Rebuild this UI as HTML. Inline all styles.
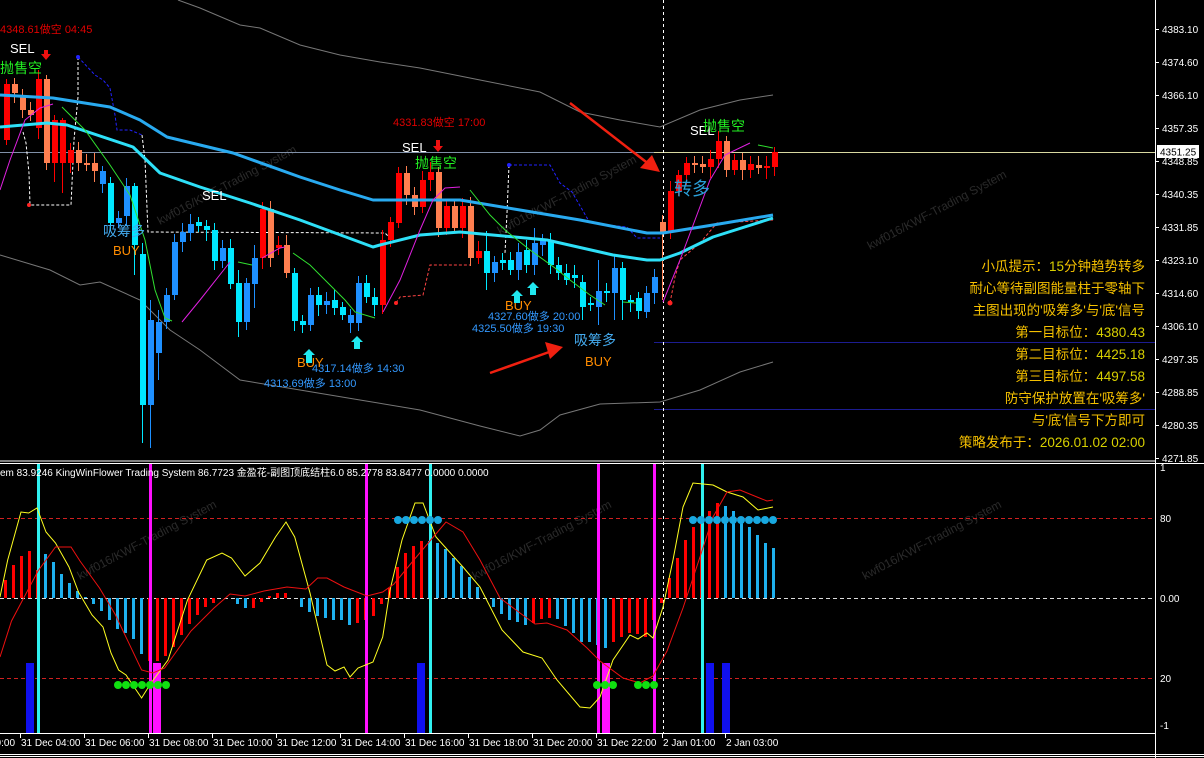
<!DOCTYPE html>
<html><head><meta charset="utf-8"><style>
html,body{margin:0;padding:0;background:#000;overflow:hidden}
svg{display:block}
text{font-family:"Liberation Sans","Noto Sans CJK SC",sans-serif}
</style></head><body>
<svg id="s" width="1204" height="758" viewBox="0 0 1204 758" xmlns="http://www.w3.org/2000/svg">
<rect width="1204" height="758" fill="#000"/>
<g fill="#2a2a2a" font-size="12">
<text transform="translate(160,225) rotate(-28)">kwf016/KWF-Trading System</text>
<text transform="translate(500,235) rotate(-28)">kwf016/KWF-Trading System</text>
<text transform="translate(870,250) rotate(-28)">kwf016/KWF-Trading System</text>
<text transform="translate(80,580) rotate(-28)">kwf016/KWF-Trading System</text>
<text transform="translate(475,580) rotate(-28)">kwf016/KWF-Trading System</text>
<text transform="translate(865,580) rotate(-28)">kwf016/KWF-Trading System</text>
</g>
<polyline fill="none" stroke="#777" stroke-width="1" points="178,0 200,8 240,25 260,28 300,45 340,55 380,62 420,68 480,80 540,92 580,112 620,120 660,127 700,110 740,100 773,95"/>
<polyline fill="none" stroke="#777" stroke-width="1" points="0,255 50,270 80,285 100,282 140,300 170,330 200,350 240,380 300,390 360,400 420,410 480,426 520,436 540,430 560,415 600,404 660,402 700,390 740,372 773,362"/>
<line x1="0" y1="152.5" x2="654" y2="152.5" stroke="#8090a8"/>
<line x1="654" y1="152.5" x2="1155" y2="152.5" stroke="#d8d8a0"/>
<line x1="654" y1="342.5" x2="1155" y2="342.5" stroke="#1c1c90"/>
<line x1="654" y1="409.5" x2="1155" y2="409.5" stroke="#1c1c90"/>
<line x1="663.5" y1="0" x2="663.5" y2="733" stroke="#fff" stroke-dasharray="3,3"/>
<polyline fill="none" stroke="#fff" stroke-dasharray="3,2" points="78,57 78,97 74,140 71,205 30,205 29,173 26,143 23,132"/>
<polyline fill="none" stroke="#22f" stroke-dasharray="3,2" points="78,57 95,75 103,80 110,88 115,115 117,130 130,130 142,135"/>
<polyline fill="none" stroke="#fff" stroke-dasharray="3,2" points="142,135 145,160 148,232 385,233 392,240"/>
<polyline fill="none" stroke="#f44" stroke-dasharray="3,2" points="396,303 400,297 423,295 430,265 470,265"/>
<polyline fill="none" stroke="#fff" stroke-dasharray="3,2" points="509,165 507,213 505,253"/>
<polyline fill="none" stroke="#22f" stroke-dasharray="3,2" points="509,165 550,165 560,183 572,192 590,223 627,227 637,238 660,238"/>
<polyline fill="none" stroke="#f44" stroke-dasharray="3,2" points="670,303 675,277 680,260 700,243 717,223 773,220"/>
<circle cx="29" cy="205" r="2" fill="#f22"/><circle cx="396" cy="303" r="2" fill="#f22"/><circle cx="670" cy="303" r="2.5" fill="#f22"/>
<circle cx="78" cy="57" r="2" fill="#22f"/><circle cx="509" cy="165" r="2" fill="#22f"/>
<g id="candles"></g>
<polyline fill="none" stroke="#29aaf0" stroke-width="3" stroke-linejoin="round" points="0,95 53,98 110,107 140,120 167,137 233,153 300,177 340,190 373,200 460,200 520,210 580,220 647,233 663,233 713,225 773,215"/>
<polyline fill="none" stroke="#2ee0f8" stroke-width="3" stroke-linejoin="round" points="0,127 47,123 67,125 133,147 160,173 200,187 250,203 300,220 373,247 380,245 420,235 460,232 547,240 613,255 647,260 660,260 680,253 713,237 773,218"/>
<g fill="none" stroke="#e020e0" stroke-width="1">
<polyline points="0,190 10,160 25,120 40,108 53,104"/><polyline points="182,322 200,300 230,262"/><polyline points="262,258 280,248 285,247"/>
<polyline points="383,312 400,280 420,230 433,200 445,188 460,187"/><polyline points="663,302 680,260 695,220 710,180 725,155 750,143"/></g>
<g fill="none" stroke="#30e030" stroke-width="1">
<polyline points="62,107 85,130 110,165 130,195 145,240 155,290 165,318 172,321"/><polyline points="238,262 252,265"/>
<polyline points="293,253 310,265 330,285 345,300 355,312 375,318"/><polyline points="470,190 490,215 505,230 530,250 555,268 570,280 590,295 605,305"/>
<polyline points="623,302 636,303"/><polyline points="758,145 773,148"/></g>
<line x1="570" y1="103" x2="650" y2="165" stroke="#f02010" stroke-width="2.5"/><polygon points="660,172 640,168 652,155" fill="#f02010"/>
<line x1="490" y1="373" x2="552" y2="351" stroke="#f02010" stroke-width="2.5"/><polygon points="563,347 545,342 550,359" fill="#f02010"/>
<g font-size="11">
<text x="0" y="33" fill="#e00000">4348.61做空 04:45</text>
<text x="393" y="126" fill="#e00000">4331.83做空 17:00</text>
<text x="312" y="372" fill="#3399ff">4317.14做多 14:30</text>
<text x="264" y="387" fill="#3399ff">4313.69做多 13:00</text>
<text x="488" y="320" fill="#3399ff">4327.60做多 20:00</text>
<text x="472" y="332" fill="#3399ff">4325.50做多 19:30</text>
</g>
<g font-size="13" fill="#fff"><text x="10" y="53">SEL</text><text x="202" y="200">SEL</text><text x="402" y="152">SEL</text><text x="690" y="135">SEL</text></g>
<g font-size="14" fill="#22ee22"><text x="0" y="73">抛售空</text><text x="415" y="168">抛售空</text><text x="703" y="131">抛售空</text></g>
<g font-size="14" fill="#44aaee"><text x="103" y="236">吸筹多</text><text x="574" y="345">吸筹多</text></g>
<g font-size="13" fill="#ff8c00"><text x="113" y="255">BUY</text><text x="297" y="367">BUY</text><text x="505" y="310">BUY</text><text x="585" y="366">BUY</text></g>
<text x="674" y="195" font-size="18" fill="#2a9fd8">转多</text>
<g fill="#f01010"><path d="M44,50h4v4h3l-5,6-5-6h3z"/><path d="M436,140h4v6h3l-5,6-5-6h3z"/></g>
<g fill="#20e8f0"><path d="M309,349l6,6h-3v8h-6v-8h-3z"/><path d="M357,336l6,6h-3v7h-6v-7h-3z"/><path d="M517,290l6,6h-3v7h-6v-7h-3z"/><path d="M533,282l6,6h-3v7h-6v-7h-3z"/></g>
<g font-size="13.5" text-anchor="end" fill="#f5c000">
<text x="1145" y="271">小瓜提示：<tspan fill="#d8d000">15</tspan>分钟趋势转多</text>
<text x="1145" y="293">耐心等待副图能量柱于零轴下</text>
<text x="1145" y="315">主图出现的'吸筹多'与'底'信号</text>
<text x="1145" y="337">第一目标位：<tspan fill="#d8d000">4380.43</tspan></text>
<text x="1145" y="359">第二目标位：<tspan fill="#d8d000">4425.18</tspan></text>
<text x="1145" y="381">第三目标位：<tspan fill="#d8d000">4497.58</tspan></text>
<text x="1145" y="403">防守保护放置在'吸筹多'</text>
<text x="1145" y="425">与'底'信号下方即可</text>
<text x="1145" y="447">策略发布于：<tspan fill="#d8d000">2026.01.02 02:00</tspan></text>
</g>
<line x1="0" y1="461" x2="1155" y2="461" stroke="#fff"/><line x1="0" y1="463.5" x2="1204" y2="463.5" stroke="#fff"/>
<line x1="0" y1="518.5" x2="1155" y2="518.5" stroke="#d02020" stroke-dasharray="4,3"/>
<line x1="0" y1="678.5" x2="1155" y2="678.5" stroke="#d02020" stroke-dasharray="4,3"/>
<line x1="0" y1="598.5" x2="1155" y2="598.5" stroke="#ddd" stroke-dasharray="4,3"/>
<g id="hist"></g>
<g fill="#1010ee"><rect x="26" y="663" width="8" height="70"/><rect x="417" y="663" width="8" height="70"/><rect x="706" y="663" width="8" height="70"/><rect x="722" y="663" width="8" height="70"/></g>
<g fill="#ff10ff"><rect x="153" y="663" width="8" height="70"/><rect x="602" y="663" width="8" height="70"/></g>
<g fill="#ff10ff"><rect x="149" y="464" width="3" height="269"/><rect x="365" y="464" width="3" height="269"/><rect x="597" y="464" width="3" height="269"/><rect x="653" y="464" width="3" height="269"/></g>
<g fill="#30f0f0"><rect x="37" y="464" width="3" height="269"/><rect x="429" y="464" width="3" height="269"/><rect x="701" y="464" width="3" height="269"/></g>
<polyline fill="none" stroke="#ffff20" stroke-width="1" points="0,597 7.7,560 21,512 28.7,513 37,508 46,532 55.5,543 69,567 78.5,592 92,615 103,627 111,653 118.6,670 126,675 141.6,698 151,683 168,660 187.5,600 206.7,560 222,553 231.5,558 245,576 260,563 275.5,537 286,522 294.7,537 310,593 327,665 335,671 344,667 350,677 358,668 373,662 382.7,637 390,590 402,540 415,503 423,503 436,537 463,567 480,587 502,630 523,652 542,658 557,680 580,707 590,708 600,697 613,660 630,635 638,639 647,633 653,638 663,607 673,560 683,507 693,483 713,485 727,492 743,497 758,510 773,507"/>
<polyline fill="none" stroke="#ee1010" stroke-width="1" points="0,657 11.5,621 38,571 55.5,547 71,547 80,561 99.5,588 115,614 141.6,670 153,673 164.6,668 191,631 214,608 230,594 245,596 264,591 287,587 306,589 317.6,578 327,578 344,587 367,596 382.7,592 394,584 413,561 446,522 463,532 480,560 500,598 520,613 535,624 547,623 567,630 587,648 600,661 623,678 640,683 653,676 667,651 683,608 700,557 713,517 727,492 740,490 757,497 767,501 773,500"/>
<g id="dots"></g>
<text x="0" y="476" font-size="10" fill="#fff">em 83.9246  KingWinFlower Trading System 86.7723  金盈花-副图顶底结柱6.0 85.2778 83.8477 0.0000 0.0000</text>
<line x1="0" y1="733.5" x2="1155" y2="733.5" stroke="#fff"/>
<line x1="0" y1="754.5" x2="1204" y2="754.5" stroke="#fff"/><line x1="0" y1="756.5" x2="1204" y2="756.5" stroke="#fff"/>
<g id="taxis" font-size="10" fill="#fff"></g>
<line x1="1155.5" y1="0" x2="1155.5" y2="758" stroke="#fff"/>
<g id="paxis" font-size="10" fill="#fff"></g>
<rect x="1157" y="145" width="42" height="13" fill="#fff"/><text x="1160" y="155.5" font-size="10" fill="#000">4351.25</text>
</svg>
<script>
var NS="http://www.w3.org/2000/svg";
function el(p,t,a){var e=document.createElementNS(NS,t);for(var k in a)e.setAttribute(k,a[k]);p.appendChild(e);return e;}
var col={R:"#ff0000",S:"#ff7f50",B:"#1e90ff",C:"#00e8ff"};
var c="R84-140,S84-93,S96-110,S110-115,R79-128,S79-163,R120-163,R120-163,R150-163,S150-163,S163-165,S163-171,B171-184,C183-223,B218-223,B186-216,C186-245,C254-405,B320-405,B322-353,B295-322,B242-295,B232-242,B224-233,C222-226,C226-230,C230-261,B248-261,C248-284,C283-322,B283-322,B258-284,R209-258,S209-258,R245-248,S245-273,C273-321,C321-325,B295-325,C295-305,B301-305,C300-308,C307-315,B315-323,B283-323,C283-297,C297-305,R240-305,R222-240,R173-223,S173-195,S195-207,R180-207,R172-180,S172-228,R206-228,S206-228,R206-228,S206-258,R251-258,C251-273,B262-273,C260-263,C260-270,B252-270,C250-265,B243-265,B240-245,C240-265,C265-273,C273-280,C275-278,C282-307,C303-305,B291-307,C291-293,B268-293,C268-300,C300-302,C298-311,B293-312,B277-293,S222-232,R191-232,R175-191,R163-175,S163-165,S164-167,R159-167,R141-159,S141-170,R160-170,S160-170,R164-170,S165-168,R166-168,R152-167".split(",");
var W={5:[75,170],6:[115,182],7:[118,193],16:[183,275],17:[243,443],18:[300,448],19:[310,380],29:[270,337],31:[245,308],60:[231,290],66:[228,275],72:[275,320],74:[260,325],76:[255,320],77:[262,320],82:[215,300]};
var g=document.getElementById("candles");
c.forEach(function(s,k){var t=s[0],a=s.slice(1).split("-"),o=+a[0],b=+a[1];var x=6+8*k;var w=W[k]||[o-5-(k*7%6),b+5+(k*5%7)];
el(g,"line",{x1:x+.5,x2:x+.5,y1:w[0],y2:w[1],stroke:col[t]});el(g,"rect",{x:x-2,y:o,width:6,height:Math.max(b-o,2),fill:col[t]});});
var h="R580,R565,R556,R551,R570,B554,B562,B574,B583,B591,B597,B604,B611,B620,B629,B633,B639,B654,R661,R661,R656,R647,R635,R624,R615,R607,R603,R598,R598,B604,B608,R608,R602,R596,R593,R593,R598,B607,B612,B616,B618,B620,B620,B625,R623,R620,R616,R604,R588,R567,R553,R546,R541,B541,B543,B549,B558,B566,B577,B587,R598,B607,B614,B620,B622,B625,R623,R619,R618,B619,B626,B633,B642,B642,B645,B648,R642,R637,R633,R634,R637,R620,R603,R578,R558,R540,R527,R520,R511,R503,B506,B511,B518,B527,B535,B543,B548".split(",");
var hg=document.getElementById("hist");
h.forEach(function(s,k){var t=s[0],y=+s.slice(1);var x=4+8*k;var y1=Math.min(y,598),y2=Math.max(y,598);if(y2-y1<1)return;el(hg,"rect",{x:x,y:y1,width:3,height:y2-y1,fill:t=="R"?"#ff0000":"#1eb0ee"});});
var dg=document.getElementById("dots");
[[118,7,"#10e010",685],[597,3,"#10e010",685],[638,3,"#10e010",685],[398,6,"#18a8e0",520],[693,11,"#18a8e0",520]].forEach(function(d){for(var i=0;i<d[1];i++)el(dg,"circle",{cx:d[0]+i*8,cy:d[3],r:4,fill:d[2]});});
var tg=document.getElementById("taxis");
el(tg,"text",{x:-10,y:746}).textContent="00:00";
var L=["31 Dec 04:00","31 Dec 06:00","31 Dec 08:00","31 Dec 10:00","31 Dec 12:00","31 Dec 14:00","31 Dec 16:00","31 Dec 18:00","31 Dec 20:00","31 Dec 22:00","2 Jan 01:00","2 Jan 03:00"];
L.forEach(function(s,i){var x=i<10?20+64*i:(i==10?662:725);el(tg,"line",{x1:x+.5,x2:x+.5,y1:734,y2:738,stroke:"#fff"});el(tg,"text",{x:x+1,y:746}).textContent=s;});
var pg=document.getElementById("paxis");
["4383.10","4374.60","4366.10","4357.35","4348.85","4340.35","4331.85","4323.10","4314.60","4306.10","4297.35","4288.85","4280.35","4271.85"].forEach(function(s,i){var y=29+33*i;el(pg,"line",{x1:1155,x2:1159,y1:y+.5,y2:y+.5,stroke:"#fff"});el(pg,"text",{x:1162,y:y+4}).textContent=s;});
[["1",471],["80",522],["0.00",602],["20",682],["-1",729]].forEach(function(a){el(pg,"text",{x:1160,y:a[1]}).textContent=a[0];});
</script>
</body></html>
